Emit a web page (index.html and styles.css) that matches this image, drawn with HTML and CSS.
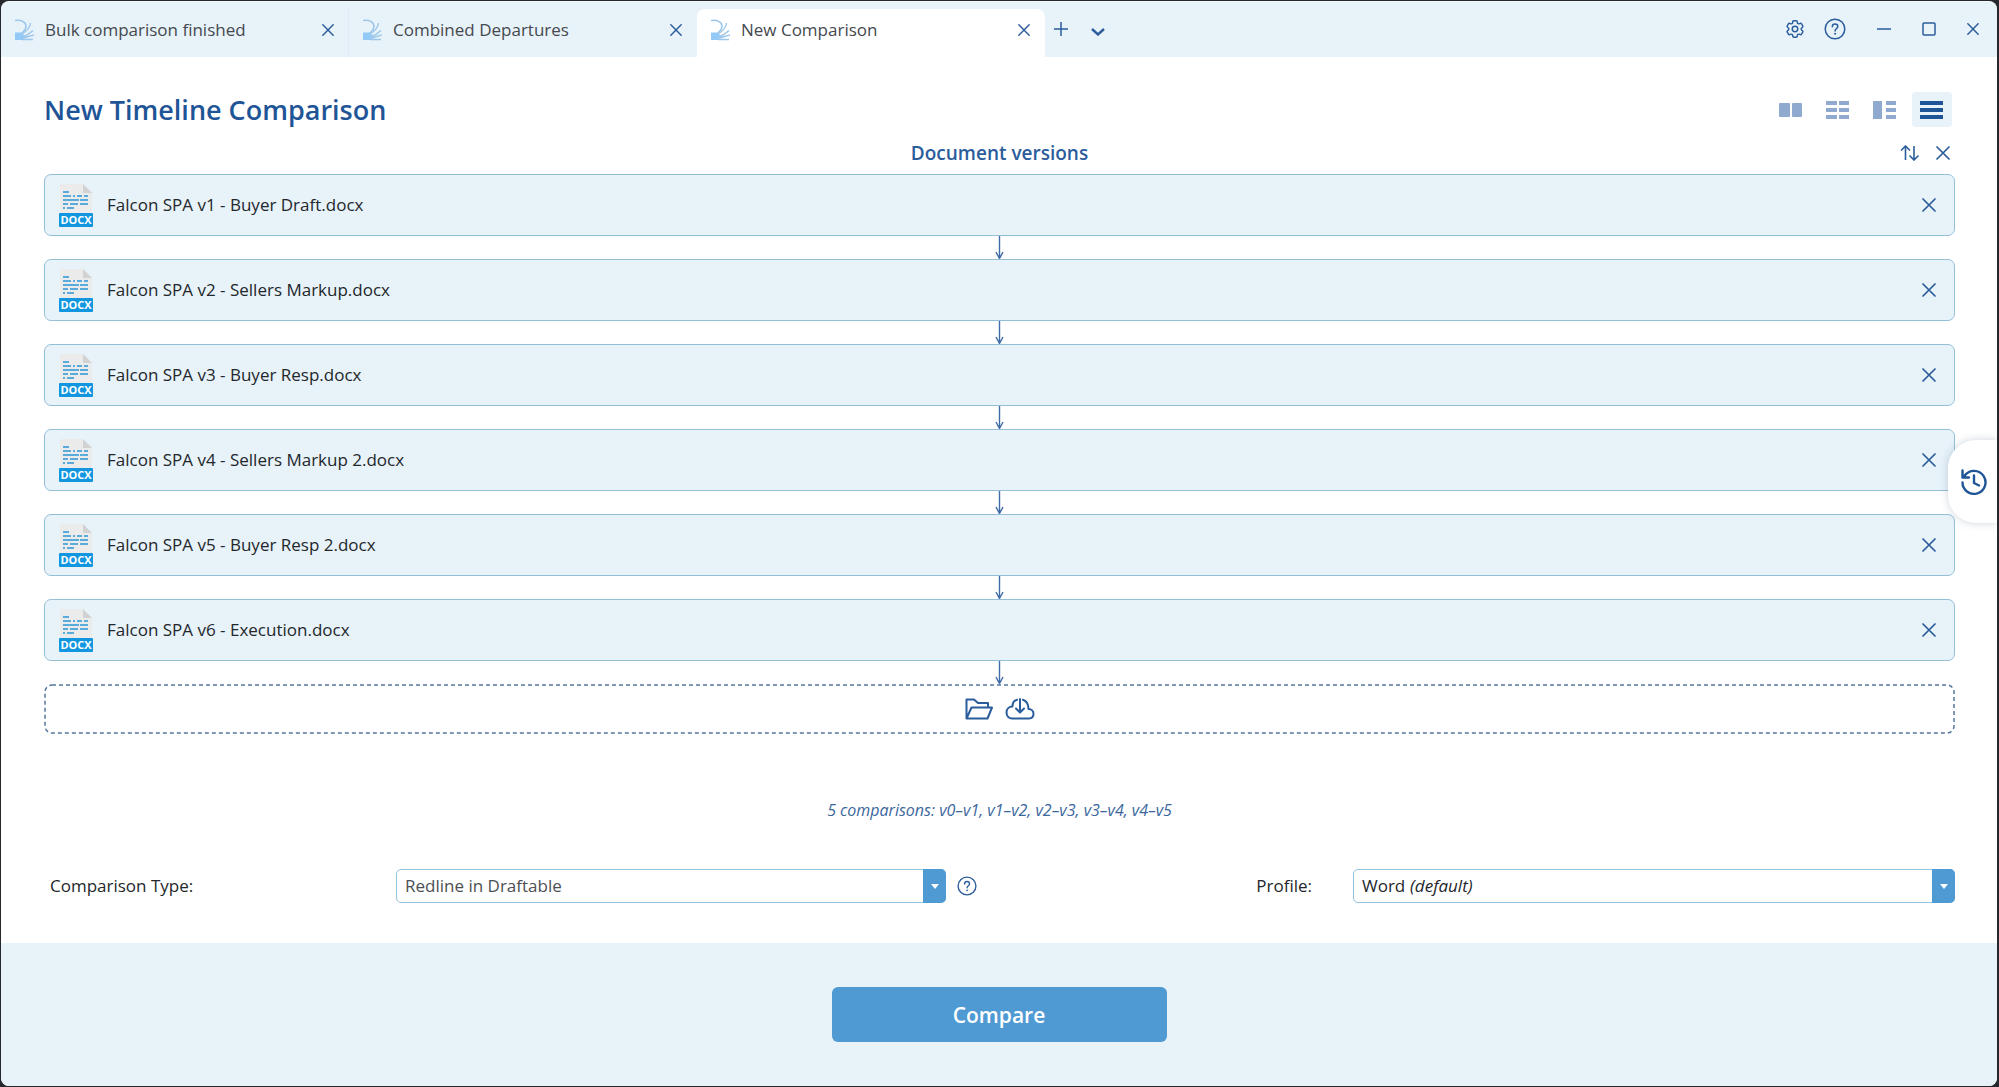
FILE: index.html
```html
<!DOCTYPE html>
<html lang="en">
<head>
    <meta charset="UTF-8">
    <meta name="viewport" content="width=device-width, initial-scale=1.0">
    <title>New Comparison</title>
    <link rel="stylesheet" href="styles.css">
</head>
<body>
    <!-- shared icons -->
    <svg class="sprite" aria-hidden="true">
        <symbol id="logo" viewBox="0 0 20 22">
            <path d="M0 13.500h7l2 2.500-1.500 5H0z" fill="#93c9f7"/>
            <path d="M0 1.500C7 .5 11 3.500 11 7.500c0 3-2 4.500-4 6.500" fill="none" stroke="#9cc6ea" stroke-width="1.600"/>
            <path d="M7 15c5-3 8-6 8.500-11M8 17.500c5-1.500 7-3 10-6M8 19c4-1 7-2 11-3M7 20.500h11" fill="none" stroke="#9cc6ea" stroke-width="1.400"/>
        </symbol>
        <symbol id="close" viewBox="0 0 14 14">
            <path d="M1 1l12 12M13 1L1 13" fill="none" stroke="currentColor" stroke-width="1.700" stroke-linecap="round"/>
        </symbol>
        <symbol id="help" viewBox="0 0 22 22">
            <circle cx="11" cy="11" r="9.800" fill="none" stroke="currentColor" stroke-width="1.500"/>
            <path d="M8.300 8.800c0-1.700 1.200-2.700 2.700-2.700s2.800 1 2.800 2.500c0 2-2.700 2.200-2.700 4.300" fill="none" stroke="currentColor" stroke-width="1.500" stroke-linecap="round"/>
            <circle cx="11.100" cy="15.800" r="1" fill="currentColor"/>
        </symbol>
        <symbol id="down" viewBox="0 0 9 23">
            <path d="M4.500 0v22M1 16l3.500 6.500L8 16" fill="none" stroke="#3f6ca6" stroke-width="1.400"/>
        </symbol>
        <symbol id="docx" viewBox="0 0 34 43">
            <path d="M1 0h23l9 9v21H1z" fill="#ebebeb"/>
            <path d="M24 0l9 9h-9z" fill="#d2d2d2"/>
            <path d="M4 8h6M4 12h8M14 12h2M18 12h5M25 12h4M4 16h16M21 16h8M4 20h5M11 20h8M21 20h8M4 24h2M8 24h7" stroke="#2a97d6" stroke-width="1.600"/>
            <rect x="0" y="29" width="34" height="14" rx="1" fill="#1296e0"/>
        </symbol>
    </svg>

    <div class="window">
        <header class="titlebar">
            <nav class="tabs">
                <div class="tab">
                    <svg class="tab-logo"><use href="#logo"/></svg>
                    <a href="#bulk">Bulk comparison finished</a>
                    <button class="icon-btn" aria-label="Close tab"><svg class="x small"><use href="#close"/></svg></button>
                </div>
                <div class="tab">
                    <svg class="tab-logo"><use href="#logo"/></svg>
                    <a href="#departures">Combined Departures</a>
                    <button class="icon-btn" aria-label="Close tab"><svg class="x small"><use href="#close"/></svg></button>
                </div>
                <div class="tab active">
                    <svg class="tab-logo"><use href="#logo"/></svg>
                    <a href="#new">New Comparison</a>
                    <button class="icon-btn" aria-label="Close tab"><svg class="x small"><use href="#close"/></svg></button>
                </div>
            </nav>
            <div class="tab-tools">
                <button class="icon-btn" aria-label="New tab">
                    <svg width="14" height="14" viewBox="0 0 14 14"><path d="M7 0v14M0 7h14" stroke="currentColor" stroke-width="1.500"/></svg>
                </button>
                <button class="icon-btn" aria-label="All tabs">
                    <svg width="14" height="14" viewBox="0 0 14 14"><path d="M1 7l6 5.500L13 7" fill="none" stroke="currentColor" stroke-width="2.400"/></svg>
                </button>
            </div>
            <div class="window-tools">
                <button class="icon-btn" aria-label="Settings">
                    <svg width="22" height="22" viewBox="0 0 24 24" fill="none" stroke="currentColor" stroke-width="1.600" stroke-linecap="round" stroke-linejoin="round"><path d="M9.594 3.940c.09-.542.56-.94 1.110-.94h2.593c.55 0 1.020.398 1.110.940l.213 1.281c.063.374.313.686.645.870.74.040.147.083.220.127.325.196.720.257 1.075.124l1.217-.456a1.125 1.125 0 0 1 1.370.490l1.296 2.247a1.125 1.125 0 0 1-.260 1.431l-1.003.827c-.293.241-.438.613-.430.992a7 7 0 0 1 0 .255c-.008.378.137.750.430.991l1.004.827c.424.350.534.955.260 1.430l-1.298 2.247a1.125 1.125 0 0 1-1.369.491l-1.217-.456c-.355-.133-.750-.072-1.076.124a6 6 0 0 1-.220.128c-.331.183-.581.495-.644.869l-.213 1.281c-.090.543-.560.940-1.110.940h-2.594c-.550 0-1.019-.398-1.110-.940l-.213-1.281c-.062-.374-.312-.686-.644-.870a6 6 0 0 1-.220-.127c-.325-.196-.720-.257-1.076-.124l-1.217.456a1.125 1.125 0 0 1-1.369-.490l-1.297-2.247a1.125 1.125 0 0 1 .260-1.431l1.004-.827c.292-.240.437-.613.430-.991a7 7 0 0 1 0-.255c.007-.380-.138-.751-.430-.992l-1.004-.827a1.125 1.125 0 0 1-.260-1.430l1.297-2.247a1.125 1.125 0 0 1 1.370-.491l1.216.456c.356.133.751.072 1.076-.124q.108-.066.220-.128c.332-.183.582-.495.644-.869z"/><circle cx="12" cy="12" r="3"/></svg>
                </button>
                <button class="icon-btn" aria-label="Help"><svg width="22" height="22"><use href="#help"/></svg></button>
                <button class="icon-btn" aria-label="Minimise">
                    <svg width="14" height="14" viewBox="0 0 14 14"><path d="M0 7h14" stroke="currentColor" stroke-width="1.500"/></svg>
                </button>
                <button class="icon-btn" aria-label="Maximise">
                    <svg width="14" height="14" viewBox="0 0 14 14"><rect x="1" y="1" width="12" height="12" rx="1" fill="none" stroke="currentColor" stroke-width="1.500"/></svg>
                </button>
                <button class="icon-btn" aria-label="Close window"><svg class="x small"><use href="#close"/></svg></button>
            </div>
        </header>

        <main>
            <div class="page-head">
                <h1>New Timeline Comparison</h1>
                <div class="views">
                    <button aria-label="Single comparison">
                        <svg width="24" height="18" viewBox="0 0 24 18"><rect x="0" y="2" width="11" height="14" rx="1"/><rect x="13" y="2" width="10" height="14" rx="1"/></svg>
                    </button>
                    <button aria-label="Bulk comparison">
                        <svg width="24" height="18" viewBox="0 0 24 18"><path d="M0 0h11v4H0zM13 0h10v4H13zM0 7h11v4H0zM13 7h10v4H13zM0 14h11v4H0zM13 14h10v4H13z"/></svg>
                    </button>
                    <button aria-label="One to many comparison">
                        <svg width="24" height="18" viewBox="0 0 24 18"><path d="M0 0h9v18H0zM13 0h10v4H13zM13 7h10v4H13zM13 14h10v4H13z"/></svg>
                    </button>
                    <button class="active" aria-label="Timeline comparison">
                        <svg width="24" height="18" viewBox="0 0 24 18"><path d="M0 0h23v4H0zM0 7h23v4H0zM0 14h23v4H0z"/></svg>
                    </button>
                </div>
            </div>

            <div class="versions-head">
                <h2>Document versions</h2>
                <div class="versions-tools">
                    <button class="icon-btn" aria-label="Reverse order">
                        <svg width="20" height="16" viewBox="0 0 20 16"><path d="M5.500 15V1M1 5.500L5.500 1 10 5.500M14 1v14M9.500 10.500L14 15l4.500-4.500" fill="none" stroke="currentColor" stroke-width="1.600"/></svg>
                    </button>
                    <button class="icon-btn" aria-label="Clear all"><svg class="x"><use href="#close"/></svg></button>
                </div>
            </div>

            <ol class="versions">
                <li>
                    <div class="version">
                        <svg class="file" viewBox="0 0 34 43"><use href="#docx"/><text x="17" y="40">DOCX</text></svg>
                        <span>Falcon SPA v1 - Buyer Draft.docx</span>
                        <button class="icon-btn" aria-label="Remove"><svg class="x"><use href="#close"/></svg></button>
                    </div>
                    <svg class="arrow"><use href="#down"/></svg>
                </li>
                <li>
                    <div class="version">
                        <svg class="file" viewBox="0 0 34 43"><use href="#docx"/><text x="17" y="40">DOCX</text></svg>
                        <span>Falcon SPA v2 - Sellers Markup.docx</span>
                        <button class="icon-btn" aria-label="Remove"><svg class="x"><use href="#close"/></svg></button>
                    </div>
                    <svg class="arrow"><use href="#down"/></svg>
                </li>
                <li>
                    <div class="version">
                        <svg class="file" viewBox="0 0 34 43"><use href="#docx"/><text x="17" y="40">DOCX</text></svg>
                        <span>Falcon SPA v3 - Buyer Resp.docx</span>
                        <button class="icon-btn" aria-label="Remove"><svg class="x"><use href="#close"/></svg></button>
                    </div>
                    <svg class="arrow"><use href="#down"/></svg>
                </li>
                <li>
                    <div class="version">
                        <svg class="file" viewBox="0 0 34 43"><use href="#docx"/><text x="17" y="40">DOCX</text></svg>
                        <span>Falcon SPA v4 - Sellers Markup 2.docx</span>
                        <button class="icon-btn" aria-label="Remove"><svg class="x"><use href="#close"/></svg></button>
                    </div>
                    <svg class="arrow"><use href="#down"/></svg>
                </li>
                <li>
                    <div class="version">
                        <svg class="file" viewBox="0 0 34 43"><use href="#docx"/><text x="17" y="40">DOCX</text></svg>
                        <span>Falcon SPA v5 - Buyer Resp 2.docx</span>
                        <button class="icon-btn" aria-label="Remove"><svg class="x"><use href="#close"/></svg></button>
                    </div>
                    <svg class="arrow"><use href="#down"/></svg>
                </li>
                <li>
                    <div class="version">
                        <svg class="file" viewBox="0 0 34 43"><use href="#docx"/><text x="17" y="40">DOCX</text></svg>
                        <span>Falcon SPA v6 - Execution.docx</span>
                        <button class="icon-btn" aria-label="Remove"><svg class="x"><use href="#close"/></svg></button>
                    </div>
                    <svg class="arrow"><use href="#down"/></svg>
                </li>
            </ol>

            <div class="dropzone">
                <svg class="dash" aria-hidden="true"><rect x="1" y="1" width="100%" height="48" rx="7"/></svg>
                <button class="icon-btn" aria-label="Open file">
                    <svg width="28" height="22" viewBox="0 0 28 22" fill="none" stroke="currentColor" stroke-width="2" stroke-linejoin="round"><path d="M1.500 20V1.500H9l4 3.500h10v4M1.500 20.500L6.500 9.500H27l-4.500 11z"/></svg>
                </button>
                <button class="icon-btn" aria-label="Download from cloud">
                    <svg width="30" height="22" viewBox="0 0 30 22" fill="none" stroke="currentColor" stroke-width="2" stroke-linecap="round" stroke-linejoin="round"><path d="M12 1.800C9 2.500 7.500 5 7.500 8.500 4 8.500 1.500 11 1.500 14.500S4 20.500 7 20.500h17c3 0 4.500-2 4.500-4.700 0-2.800-2-4.800-5-4.800C23.500 6 21.500 3 18 1.800M15 1v13M11 10.500l4 4 4-4"/></svg>
                </button>
            </div>

            <p class="summary">5 comparisons: v0–v1, v1–v2, v2–v3, v3–v4, v4–v5</p>

            <form class="options">
                <label for="type">Comparison Type:</label>
                <div class="select">
                    <select id="type" class="muted"><option>Redline in Draftable</option></select>
                    <span class="caret"></span>
                </div>
                <button type="button" class="icon-btn" aria-label="About comparison types"><svg width="20" height="20" viewBox="0 0 22 22"><use href="#help"/></svg></button>
                <label for="profile" class="profile-label">Profile:</label>
                <div class="select">
                    <select id="profile"><option>Word</option></select>
                    <em>(default)</em>
                    <span class="caret"></span>
                </div>
            </form>
        </main>

        <footer>
            <button class="compare">Compare</button>
        </footer>

        <button class="history" aria-label="History">
            <svg width="26" height="26" viewBox="0 0 26 26" fill="none" stroke="currentColor" stroke-width="2.400" stroke-linecap="round" stroke-linejoin="round"><path d="M1.500 13.500A11.500 11.500 0 1 0 4 6.200M1.500 1.500v7H8M2 8l3-3M13 6.500V14l5 2.500"/></svg>
        </button>
    </div>
</body>
</html>
```
FILE: styles.css
```css
* {
    box-sizing: border-box;
}

body {
    margin: 0;
    min-height: 100vh;
    padding: 1px 2px 1px 1px;
    background: #25282d;
    font-family: "Open Sans", "Noto Sans", sans-serif;
    font-size: 17px;
    line-height: 24px;
    color: #23272b;
    display: flex;
}

h1, h2, p, ol {
    margin: 0;
    padding: 0;
}

button, select {
    font: inherit;
    cursor: pointer;
}

svg {
    display: block;
}

.sprite {
    position: absolute;
    width: 0;
    height: 0;
}

.window {
    position: relative;
    flex: 1;
    display: flex;
    flex-direction: column;
    border-radius: 8px;
    overflow: hidden;
    background: white;
    border-top: 1px solid #f4f9fc;
}

.icon-btn {
    display: flex;
    align-items: center;
    justify-content: center;
    padding: 0;
    border: none;
    background: none;
    color: #2b5d9c;
}

.x {
    width: 14px;
    height: 14px;
}

.x.small {
    width: 12px;
    height: 12px;
}

/* title bar */
.titlebar {
    display: flex;
    height: 55px;
    padding-top: 7px;
    background: #e7f2f9;
}

.tabs {
    display: flex;
    flex: 0 1 1044px;
}

.tab {
    flex: 1;
    display: flex;
    align-items: center;
    gap: 10px;
    padding: 0 14px 7px;
    border-right: 1px solid #dfeaf2;
}

.tab:nth-child(2), .tab.active {
    border-color: transparent;
}

.tab.active {
    background: white;
    border-radius: 8px 8px 0 0;
}

.tab a {
    flex: 1;
    color: #45494e;
    text-decoration: none;
}

.tab-logo {
    width: 20px;
    height: 22px;
}

.tab-tools, .window-tools {
    display: flex;
    align-items: center;
    padding-bottom: 9px;
}

.tab-tools {
    gap: 23px;
    padding-left: 9px;
}

.window-tools {
    margin-left: auto;
    padding-right: 18px;
    gap: 31px;
}

.window-tools .icon-btn:first-child {
    margin-right: -13px;
}

/* page */
main {
    padding: 35px 42px 40px 43px;
}

.page-head {
    display: flex;
    justify-content: space-between;
    align-items: center;
    height: 35px;
}

h1 {
    font-size: 27px;
    line-height: 35px;
    font-weight: 600;
    color: #1f5597;
}

.views {
    display: flex;
    gap: 7px;
    margin-right: 3px;
}

.views button {
    display: flex;
    align-items: center;
    justify-content: center;
    width: 40px;
    height: 35px;
    padding: 0;
    border: none;
    border-radius: 4px;
    background: none;
    fill: #8fa9cf;
}

.views button.active {
    background: #e7f2f9;
    fill: #1f5597;
}

.versions-head {
    display: grid;
    grid-template-columns: 1fr auto 1fr;
    align-items: center;
    height: 47px;
    padding-top: 4px;
}

h2 {
    grid-column: 2;
    font-size: 19px;
    line-height: 24px;
    font-weight: 600;
    color: #2b5d9c;
}

.versions-tools {
    display: flex;
    justify-content: flex-end;
    gap: 16px;
    padding-right: 5px;
}

.versions {
    list-style: none;
}

.version {
    display: flex;
    align-items: center;
    gap: 14px;
    height: 62px;
    padding: 0 18px 0 14px;
    background: #e7f2f9;
    border: 1px solid #94bfd9;
    border-radius: 7px;
}

.version span {
    flex: 1;
}

.file {
    width: 34px;
    height: 43px;
}

.file text {
    font-size: 11px;
    font-weight: 700;
    text-anchor: middle;
    fill: white;
}

.arrow {
    width: 9px;
    height: 23px;
    margin: 0 auto;
}

.dropzone {
    position: relative;
    display: flex;
    align-items: center;
    justify-content: center;
    gap: 12px;
    height: 50px;
}

/* dashed outline drawn behind the buttons */
.dash {
    position: absolute;
    inset: 0;
    width: 100%;
    height: 100%;
    padding-right: 2px;
    overflow: visible;
    fill: none;
    stroke: #54779f;
    stroke-width: 1.500;
    stroke-dasharray: 4 3;
}

.dropzone .icon-btn {
    position: relative;
}

.summary {
    margin: 62px 0 45px;
    font-size: 16px;
    line-height: 28px;
    font-style: italic;
    text-align: center;
    color: #3b679d;
}

.options {
    display: grid;
    grid-template-columns: 352fr 550fr 42px 365fr 602fr;
    align-items: center;
}

.options > label:first-child {
    padding-left: 6px;
}

.profile-label {
    padding-right: 41px;
    text-align: right;
}

/* the caret and the note share one cell with the select */
.select {
    display: grid;
    align-items: center;
}

.select > * {
    grid-area: 1 / 1;
}

.select select {
    width: 100%;
    height: 34px;
    padding: 0 32px 0 8px;
    appearance: none;
    border: 1px solid #94c3df;
    border-radius: 5px;
    background: white;
    color: #23272b;
}

.select select.muted {
    color: #4c5054;
}

.select em {
    padding-left: 57px;
    pointer-events: none;
}

.caret {
    justify-self: end;
    display: flex;
    align-items: center;
    justify-content: center;
    width: 23px;
    height: 34px;
    border-radius: 0 5px 5px 0;
    background: #4f9ad3;
    pointer-events: none;
}

.caret::before {
    content: "";
    border: 4px solid transparent;
    border-top: 5px solid white;
    border-bottom: none;
}

footer {
    flex: 1;
    display: flex;
    align-items: center;
    justify-content: center;
    padding: 43px 0;
    background: #e7f2f9;
}

.compare {
    width: 335px;
    height: 55px;
    border: none;
    border-radius: 6px;
    background: #4f9ad3;
    color: white;
    font-size: 21px;
    font-weight: 600;
}

/* history drawer handle, floats over the list */
.history {
    position: absolute;
    top: 438px;
    right: 0;
    display: flex;
    align-items: center;
    justify-content: center;
    width: 49px;
    height: 83px;
    padding: 0 0 0 3px;
    border: none;
    border-radius: 28px 0 0 28px;
    background: white;
    color: #1f5597;
    box-shadow: 0 0 8px rgba(60, 90, 120, 0.25);
}
```
